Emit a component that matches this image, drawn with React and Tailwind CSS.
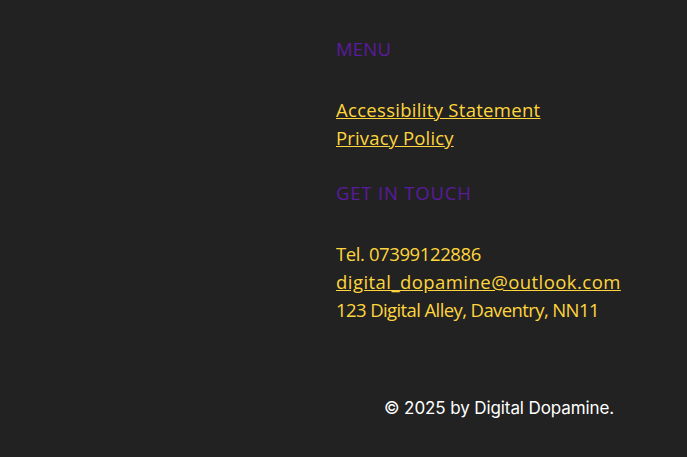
export default function App() {
  const f = { fontFamily: '"Open Sans", "Noto Sans", sans-serif' };
  return (
    <div className="w-[687px] h-[457px] bg-[#222222] overflow-hidden" style={f}>
      <div className="pl-[336px] pt-[35px] flex flex-col">
        <div className="text-[18.5px] leading-[28px] text-[#5b1a9e] tracking-[0.2px]">MENU</div>
        <div className="mt-[33px] flex flex-col text-[18.5px] leading-[28px] text-[#ffd53d]">
          <a className="underline self-start tracking-[0.3px]">Accessibility Statement</a>
          <a className="underline self-start tracking-[0.15px]">Privacy Policy</a>
        </div>
        <div className="mt-[27px] text-[18.5px] leading-[28px] text-[#5b1a9e] tracking-[0.8px]">GET IN TOUCH</div>
        <div className="mt-[33px] flex flex-col text-[18.5px] leading-[28px] text-[#ffd53d]">
          <span className="tracking-[-0.4px]">Tel. 07399122886</span>
          <a className="underline self-start tracking-[0.45px]">digital_dopamine@outlook.com</a>
          <span className="tracking-[-0.6px]">123 Digital Alley, Daventry, NN11</span>
        </div>
      </div>
      <div className="pl-[384px] mt-[72px] text-[17px] leading-[24px] text-white tracking-[-0.1px]" style={{ fontFamily: 'Inter, sans-serif' }}>
        © 2025 by Digital Dopamine.
      </div>
    </div>
  );
}
